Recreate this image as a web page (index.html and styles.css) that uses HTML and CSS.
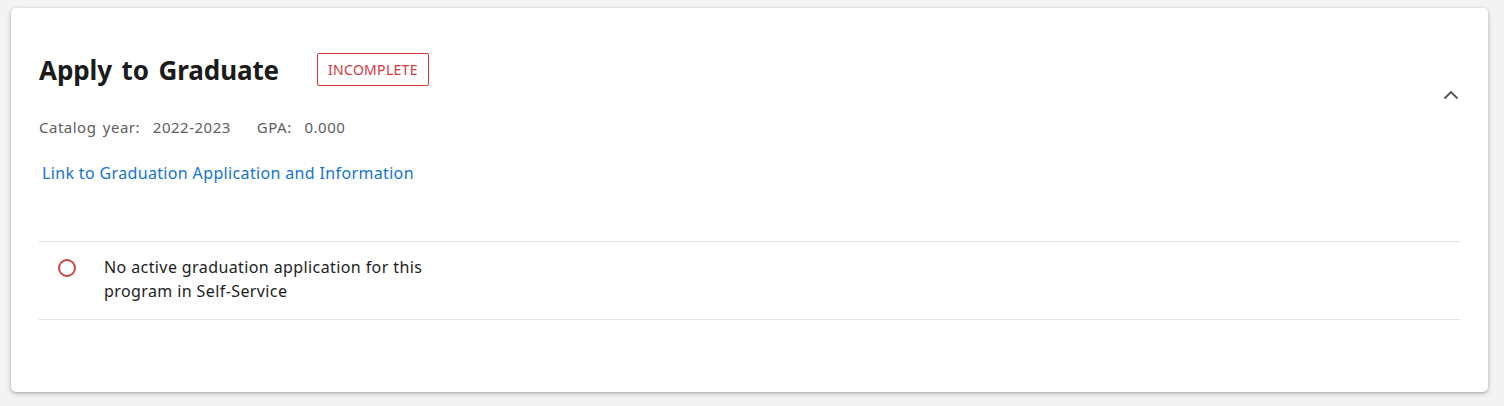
FILE: index.html
```html
<!DOCTYPE html>
<html lang="en">
<head>
<meta charset="utf-8">
<title>Apply to Graduate</title>
<link rel="stylesheet" href="styles.css">
</head>
<body>
<section class="card">
  <div class="head">
    <div class="head-main">
      <div class="title-row">
        <h2 class="title">Apply to Graduate</h2>
        <span class="badge">INCOMPLETE</span>
      </div>
      <div class="meta">
        <span class="meta-item">Catalog year:&nbsp; 2022-2023</span>
        <span class="meta-item">GPA:&nbsp; 0.000</span>
      </div>
    </div>
    <button class="toggle" aria-label="Collapse">
      <svg width="16" height="10" viewBox="0 0 16 10"><path d="M1.5 8.5 L8 2 L14.5 8.5" fill="none" stroke="#555" stroke-width="1.8"/></svg>
    </button>
  </div>
  <a class="link" href="#">Link to Graduation Application and Information</a>
  <ul class="reqs">
    <li class="req">
      <span class="status"></span>
      <span class="req-text">No active graduation application for this program in Self-Service</span>
    </li>
  </ul>
</section>
</body>
</html>
```
FILE: styles.css
```css
html, body {
  margin: 0;
  padding: 0;
}
body {
  background: #f3f3f3;
  font-family: "Noto Sans", "Open Sans", sans-serif;
  padding: 8px 16px 14px 11px;
}
.card {
  background: #fff;
  border-radius: 5px;
  box-shadow: 0 1px 3px rgba(0,0,0,0.25), 0 2px 6px rgba(0,0,0,0.12);
  padding: 45px 28px 72px 28px;
  width: 1421px;
}
.head {
  display: flex;
  align-items: center;
  justify-content: space-between;
}
.title-row {
  display: flex;
  align-items: center;
  height: 33px;
}
.title {
  margin: 0;
  font-size: 26px;
  font-weight: 700;
  color: #1b1b1b;
  word-spacing: 3px;
  letter-spacing: -0.1px;
}
.badge {
  margin-left: 38px;
  border: 1px solid #d9363e;
  border-radius: 2px;
  color: #d9363e;
  font-size: 14px;
  height: 31px;
  line-height: 31px;
  padding: 0 10px;
  letter-spacing: 0.3px;
}
.meta {
  margin-top: 31px;
  font-size: 15px;
  line-height: 20px;
  color: #606060;
  display: flex;
  gap: 26px;
  letter-spacing: 0.5px;
  word-spacing: 2px;
}
.toggle {
  border: 0;
  background: none;
  padding: 0;
  width: 18px;
  height: 12px;
  display: flex;
  align-items: center;
  justify-content: center;
}
.link {
  display: block;
  margin-top: 25px;
  margin-left: 3px;
  font-size: 16px;
  line-height: 22px;
  color: #1673d3;
  text-decoration: none;
  width: max-content;
  letter-spacing: 0.35px;
}
.reqs {
  list-style: none;
  margin: 57px 0 0 0;
  padding: 0;
  border-top: 1px solid #e2e2e2;
  border-bottom: 1px solid #e2e2e2;
}
.req {
  display: flex;
  align-items: flex-start;
  padding: 13px 0 16px 0;
}
.status {
  box-sizing: border-box;
  width: 18px;
  height: 18px;
  border: 2px solid #d6404a;
  border-radius: 50%;
  margin: 4px 0 0 19px;
  flex: none;
}
.req-text {
  margin-left: 28px;
  font-size: 16px;
  line-height: 24px;
  color: #1d1d1d;
  max-width: 340px;
  letter-spacing: 0.4px;
}
```
